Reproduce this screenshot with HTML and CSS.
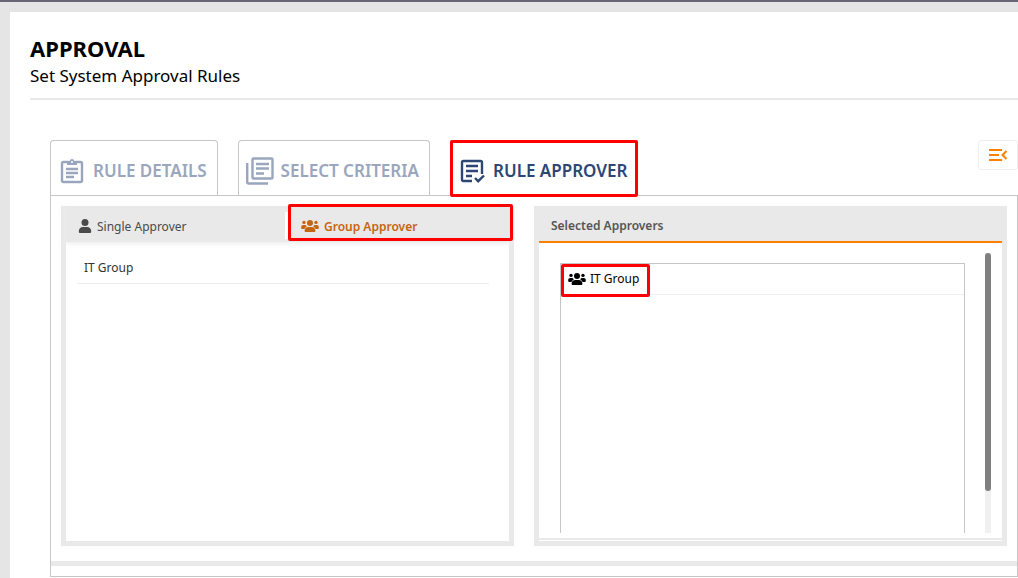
FILE: index.html
```html
<!doctype html>
<html lang="en">
<head>
    <meta charset="UTF-8">
    <meta name="viewport" content="width=device-width, initial-scale=1.0">
    <title>Approval</title>
    <link rel="stylesheet" href="styles.css">
</head>
<body>
<svg class="sprite" aria-hidden="true">
    <symbol id="users" viewBox="0 0 18 14">
        <circle cx="9" cy="4" r="3"/>
        <circle cx="3" cy="3.4" r="1.7"/>
        <circle cx="15" cy="3.4" r="1.7"/>
        <path d="M3.600 11.800C3.600 9.400 5.200 8 7.200 8h3.600c2 0 3.600 1.400 3.600 3.800 0 .8-.4 1.200-1.200 1.200H4.800c-.8 0-1.200-.4-1.200-1.200z"/>
        <path d="M.2 8.200C.2 6.900 1 6 2.300 6h1.500c.5 0 .9.100 1.300.4.200.4.400.7.700 1C4.800 8 4 8.800 3.400 10H1.200c-.7 0-1-.3-1-.9zM17.800 8.200C17.800 6.900 17 6 15.700 6h-1.500c-.5 0-.9.100-1.300.4-.2.400-.4.700-.7 1 1 .6 1.800 1.400 2.400 2.600h2.200c.7 0 1-.3 1-.9z"/>
    </symbol>
</svg>
<main class="page">
    <header class="page-header">
        <h1>APPROVAL</h1>
        <p>Set System Approval Rules</p>
    </header>
    <div class="content">
        <div class="toolbar">
            <nav class="tabs">
                <button class="tab" type="button">
                    <svg class="tab-icon clipboard" viewBox="0 0 24 26" fill="none" stroke="currentColor" stroke-width="2.400">
                        <path d="M8.500 4H3.500Q2 4 2 5.500v17Q2 24 3.500 24h17q1.500 0 1.500-1.500v-17Q22 4 20.500 4h-5"/>
                        <path d="M7 3h2.500a2.600 2.600 0 0 1 5 0H17V7H7z" fill="currentColor" stroke="none"/>
                        <circle cx="12" cy="4" r="1" fill="#fff" stroke="none"/>
                        <path d="M6 11h12M6 15h12M6 19h8"/>
                    </svg>
                    <span>RULE DETAILS</span>
                </button>
                <button class="tab" type="button">
                    <svg class="tab-icon" viewBox="0 0 28 28" fill="none" stroke="currentColor" stroke-width="2.400">
                        <rect x="6.500" y="1.500" width="20" height="20" rx="1"/>
                        <path d="M1.200 6v19q0 1.500 1.500 1.500H22M10 7h13M10 11.500h13M10 16.500h8"/>
                    </svg>
                    <span>SELECT CRITERIA</span>
                </button>
                <button class="tab active highlight" type="button">
                    <svg class="tab-icon approve" viewBox="0 0 24 24" fill="none" stroke="currentColor" stroke-width="2.400">
                        <path d="M12 22H3.500Q2 22 2 20.500v-17Q2 2 3.500 2h17Q22 2 22 3.500V15M6 7h12M6 12h12M6 17h6M15 19l3.200 3.200L24 16.500"/>
                    </svg>
                    <span>RULE APPROVER</span>
                </button>
            </nav>
            <button class="collapse" type="button" aria-label="Collapse menu">
                <svg viewBox="0 0 20 14" fill="none" stroke="currentColor" stroke-width="2">
                    <path d="M1 2h13M1 7h10M1 12h13M18.500 3L14.500 7l4 4"/>
                </svg>
            </button>
        </div>
        <section class="panel">
            <div class="cards">
                <div class="card">
                    <div class="card-tabs">
                        <button class="card-tab" type="button">
                            <svg class="user-icon" viewBox="0 0 14 14" fill="currentColor">
                                <circle cx="7" cy="3.500" r="3.500"/>
                                <path d="M.8 12.500C.8 9.500 2.500 8 4.800 8h4.400c2.300 0 4 1.500 4 4.500 0 1-.6 1.500-1.500 1.500H2.300C1.400 14 .8 13.500.8 12.500z"/>
                            </svg>
                            <span>Single Approver</span>
                        </button>
                        <button class="card-tab active highlight" type="button">
                            <svg class="users-icon"><use href="#users"/></svg>
                            <span>Group Approver</span>
                        </button>
                    </div>
                    <ul class="groups">
                        <li>IT Group</li>
                    </ul>
                </div>
                <div class="card">
                    <h2 class="card-title">Selected Approvers</h2>
                    <div class="selected">
                        <ul class="selected-list">
                            <li>
                                <span class="chip highlight">
                                    <svg class="users-icon"><use href="#users"/></svg>
                                    <span>IT Group</span>
                                </span>
                            </li>
                        </ul>
                        <div class="scrollbar"><div class="thumb"></div></div>
                    </div>
                </div>
            </div>
            <div class="divider"></div>
        </section>
    </div>
</main>
</body>
</html>
```
FILE: styles.css
```css
* {
    box-sizing: border-box;
}

body {
    margin: 0;
    padding: 10px 0 0 10px;
    border-top: 2px solid #666677;
    background: #e5e5e5;
    color: #000;
    font-family: "Noto Sans", "Open Sans", sans-serif;
    font-size: 12px;
}

h1, h2, p, ul {
    margin: 0;
    padding: 0;
}

ul {
    list-style: none;
}

button {
    margin: 0;
    padding: 0;
    border: 0;
    background: none;
    font: inherit;
    cursor: pointer;
}

svg {
    flex: none;
}

.sprite {
    position: absolute;
    width: 0;
    height: 0;
}

.page {
    min-height: calc(100vh - 12px);
    padding: 20px 0 0 20px;
    background: #fff;
}

.page-header {
    height: 68px;
    padding-top: 3px;
    border-bottom: 2px solid #e9e9e9;
}

.page-header h1 {
    font-size: 22px;
    line-height: 26px;
}

.page-header p {
    font-size: 17px;
    line-height: 30px;
}

.content {
    padding: 40px 0 0 20px;
}

.toolbar {
    display: flex;
    justify-content: space-between;
    align-items: flex-start;
}

.tabs {
    display: flex;
    gap: 20px;
}

.tab {
    display: flex;
    align-items: center;
    gap: 7px;
    height: 55px;
    padding: 5px 10px 0 7px;
    border: 1px solid #c6c6c6;
    border-bottom: 0;
    border-radius: 4px 4px 0 0;
    color: #9aa6bd;
    font-size: 17px;
    font-weight: 600;
}

.tab.active {
    height: 56px;
    margin-bottom: -1px;
    padding-bottom: 1px;
    background: #fff;
    color: #2d4673;
}

.tab-icon {
    width: 28px;
    height: 28px;
}

.clipboard {
    height: 26px;
}

.approve {
    height: 24px;
}

/* red frame drawn over the marked items */
.highlight {
    position: relative;
}

.highlight::after {
    content: "";
    position: absolute;
    inset: -1px;
    border: 3px solid #f00;
    border-radius: 2px;
}

.collapse {
    display: flex;
    align-items: center;
    justify-content: center;
    width: 40px;
    height: 30px;
    border: 1px solid #eee;
    border-radius: 3px;
    color: #ff7f00;
}

.collapse svg {
    width: 20px;
    height: 14px;
}

.panel {
    padding-bottom: 10px;
    border: 1px solid #c6c6c6;
}

.cards {
    display: grid;
    grid-template-columns: 453fr 473fr;
    gap: 20px;
    padding: 10px 10px 15px;
}

.card {
    display: flex;
    flex-direction: column;
    height: 340px;
    border: 5px solid #e9e9e9;
    border-top: 0;
}

.card-tabs {
    display: grid;
    grid-template-columns: 1fr 1fr;
    margin-right: -3px;
    background: #e9e9e9;
    box-shadow: 0 2px 5px #eee;
}

.card-tab {
    display: flex;
    align-items: center;
    gap: 5px;
    height: 36px;
    padding: 4px 12px 0;
    background: linear-gradient(#fff, #fff) no-repeat right bottom 3px / 4px 27px;
    color: #4a4a4a;
}

.card-tab.active {
    background: none;
    color: #c6650f;
    font-weight: 600;
}

.card-tab.highlight::after {
    inset: -2px -1px 1px;
}

.user-icon {
    width: 14px;
    height: 14px;
}

.users-icon {
    width: 18px;
    height: 14px;
    fill: currentColor;
}

.groups {
    padding: 10px 20px 0 11px;
}

.groups li {
    padding: 0 7px;
    border-bottom: 1px solid #eee;
    color: #333;
    line-height: 31px;
}

.card-title {
    padding: 5px 12px 0;
    background: #e9e9e9;
    border-bottom: 2px solid #ff7f00;
    color: #555;
    font-size: 12px;
    font-weight: 600;
    line-height: 30px;
}

.selected {
    display: flex;
    flex: 1;
    gap: 20px;
    margin: 0 0 1px;
    padding: 10px 11px 5px 21px;
    border-bottom: 2px solid #e9e9e9;
}

.selected-list {
    flex: 1;
    margin-top: 10px;
    border: 1px solid #c6c6c6;
    border-bottom: 0;
}

.selected-list li {
    height: 31px;
    border-bottom: 1px solid #eee;
}

.chip {
    display: inline-flex;
    align-items: center;
    gap: 4px;
    height: 29px;
    padding: 0 11px 0 7px;
}

.chip.highlight::after {
    inset: 0 0 -4px;
}

.scrollbar {
    width: 6px;
    background: #f0f0f0;
}

.thumb {
    height: 85%;
    border-radius: 3px;
    background: #7f7f7f;
}

.divider {
    height: 5px;
    background: #e9e9e9;
}
```
